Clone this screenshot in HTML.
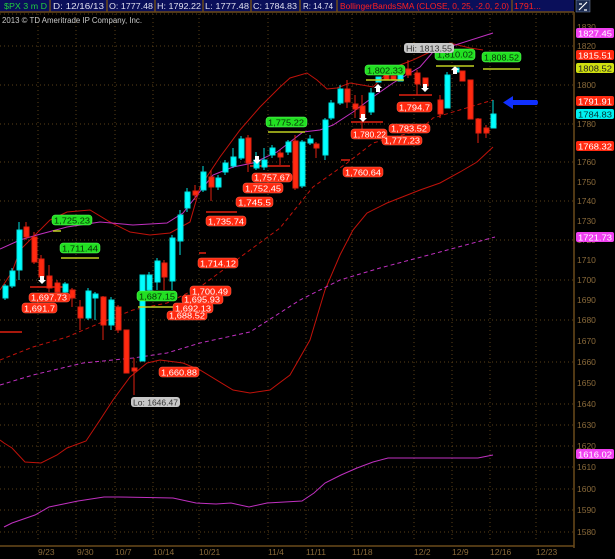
<!DOCTYPE html>
<html><head><meta charset="utf-8"><style>
html,body{margin:0;padding:0;background:#000;}
svg{display:block;font-family:"Liberation Sans",sans-serif;}
</style></head><body>
<svg width="615" height="559" viewBox="0 0 615 559" xmlns="http://www.w3.org/2000/svg">
<rect width="615" height="559" fill="#000"/>
<g stroke="#5a4018" stroke-width="1" stroke-dasharray="1,3">
<line x1="0" y1="14" x2="573" y2="14"/>
<line x1="0" y1="46" x2="573" y2="46"/><line x1="0" y1="85" x2="573" y2="85"/>
<line x1="0" y1="124" x2="573" y2="124"/><line x1="0" y1="162" x2="573" y2="162"/>
<line x1="0" y1="201" x2="573" y2="201"/><line x1="0" y1="240" x2="573" y2="240"/>
<line x1="0" y1="280" x2="573" y2="280"/><line x1="0" y1="320" x2="573" y2="320"/>
<line x1="0" y1="362" x2="573" y2="362"/><line x1="0" y1="404" x2="573" y2="404"/>
<line x1="0" y1="425" x2="573" y2="425"/><line x1="0" y1="446" x2="573" y2="446"/>
<line x1="0" y1="467" x2="573" y2="467"/><line x1="0" y1="489" x2="573" y2="489"/>
<line x1="0" y1="510" x2="573" y2="510"/><line x1="0" y1="532" x2="573" y2="532"/>
<line x1="38" y1="14" x2="38" y2="542"/><line x1="76" y1="14" x2="76" y2="542"/>
<line x1="115" y1="14" x2="115" y2="542"/><line x1="153" y1="14" x2="153" y2="542"/>
<line x1="199" y1="14" x2="199" y2="542"/><line x1="268" y1="14" x2="268" y2="542"/>
<line x1="306" y1="14" x2="306" y2="542"/><line x1="352" y1="14" x2="352" y2="542"/>
<line x1="414" y1="14" x2="414" y2="542"/><line x1="452" y1="14" x2="452" y2="542"/>
<line x1="490" y1="14" x2="490" y2="542"/><line x1="536" y1="14" x2="536" y2="542"/>
</g>
<line x1="574" y1="12" x2="574" y2="548" stroke="#6a4a1a" stroke-width="1.5"/>
<line x1="0" y1="546" x2="574" y2="546" stroke="#6a4a1a" stroke-width="1.5"/>
<g fill="#8a6a3a" font-size="8.5">
<text x="577" y="30">1830</text><text x="577" y="49">1820</text><text x="577" y="88">1800</text>
<text x="577" y="127">1780</text><text x="577" y="165">1760</text><text x="577" y="185">1750</text>
<text x="577" y="204">1740</text><text x="577" y="224">1730</text><text x="577" y="243">1720</text>
<text x="577" y="263">1710</text><text x="577" y="283">1700</text><text x="577" y="303">1690</text>
<text x="577" y="323">1680</text><text x="577" y="344">1670</text><text x="577" y="365">1660</text>
<text x="577" y="386">1650</text><text x="577" y="407">1640</text><text x="577" y="428">1630</text>
<text x="577" y="449">1620</text><text x="577" y="470">1610</text><text x="577" y="492">1600</text>
<text x="577" y="513">1590</text><text x="577" y="535">1580</text>
<text x="38" y="555">9/23</text><text x="77" y="555">9/30</text><text x="115" y="555">10/7</text>
<text x="153" y="555">10/14</text><text x="199" y="555">10/21</text><text x="268" y="555">11/4</text>
<text x="306" y="555">11/11</text><text x="352" y="555">11/18</text><text x="414" y="555">12/2</text>
<text x="452" y="555">12/9</text><text x="490" y="555">12/16</text><text x="536" y="555">12/23</text>
</g>
<g fill="none" stroke-width="1">
<polyline stroke="#c0120a" points="0,290 12,272 20,250 33,237 50,220 67,212 90,210 110,222 130,232 150,235 170,233 190,222 200,187 220,157 240,130 260,107 280,87 290,78 307,73 317,80 327,89 337,88 350,83 362,85 373,87 387,73 400,65 413,60 430,52 450,43 470,48 483,50"/>
<polyline stroke="#c0120a" stroke-dasharray="4,3" points="0,360 33,347 67,337 100,323 133,310 167,303 200,287 250,250 280,228 313,187 347,163 373,143 420,130 433,118 493,100"/>
<polyline stroke="#c0120a" points="0,440 4,443 12,448 25,462 41,463 57,455 67,448 86,441 100,420 113,400 130,377 147,363 160,360 183,363 200,370 233,390 250,393 270,390 290,375 310,340 325,290 340,255 353,230 367,213 387,203 420,190 440,183 460,172 477,162 493,147"/>
<polyline stroke="#c030c0" points="0,249 20,240 37,235 67,227 100,222 133,225 167,223 183,213 213,175 233,167 253,163 277,152 303,132 320,130 333,125 353,112 373,97 393,83 420,67 433,52 493,33"/>
<polyline stroke="#c030c0" stroke-dasharray="4,3" points="0,385 33,375 83,363 133,358 167,353 200,343 250,332 300,300 340,280 380,268 440,252 495,237"/>
<polyline stroke="#c030c0" points="4,527 12,523 35,515 49,507 78,501 104,497 118,497 173,498 196,503 216,504 231,503 249,507 267,503 302,501 314,493 325,483 341,475 357,468 373,462 388,458 412,458 451,458 478,458 493,455"/>
</g>
<g stroke="#e02010" stroke-width="1.5">
<line x1="0" y1="332" x2="22" y2="332"/><line x1="30" y1="287" x2="68" y2="287"/>
<line x1="206" y1="212" x2="237" y2="212"/><line x1="250" y1="166" x2="290" y2="166"/>
<line x1="351" y1="122" x2="383" y2="122"/><line x1="399" y1="95" x2="432" y2="95"/>
<line x1="341" y1="160" x2="350" y2="160"/><line x1="199" y1="253" x2="206" y2="253"/>
</g>
<g stroke-width="1">
<g stroke="#00e0e0" fill="#00ffff">
<line x1="5" y1="284" x2="5" y2="300"/><rect x="3" y="286" width="5" height="12"/>
<line x1="12" y1="268" x2="12" y2="288"/><rect x="10" y="271" width="5" height="15"/>
<line x1="19" y1="222" x2="19" y2="280"/><rect x="17" y="230" width="5" height="40"/>
<line x1="65" y1="282" x2="65" y2="296"/><rect x="63" y="284" width="5" height="8"/>
<line x1="88" y1="288" x2="88" y2="320"/><rect x="86" y="291" width="5" height="27"/>
<line x1="95" y1="292" x2="95" y2="320"/><rect x="93" y="294" width="5" height="4"/>
<line x1="111" y1="297" x2="111" y2="330"/><rect x="109" y="300" width="5" height="25"/>
<rect x="140" y="275" width="5" height="86"/>
<line x1="149" y1="272" x2="149" y2="300"/><rect x="147" y="275" width="5" height="15"/>
<line x1="157" y1="258" x2="157" y2="290"/><rect x="155" y="261" width="5" height="21"/>
<line x1="172" y1="235" x2="172" y2="290"/><rect x="170" y="238" width="5" height="43"/>
<line x1="180" y1="210" x2="180" y2="255"/><rect x="178" y="215" width="5" height="26"/>
<line x1="187" y1="188" x2="187" y2="212"/><rect x="185" y="192" width="5" height="16"/>
<line x1="203" y1="166" x2="203" y2="192"/><rect x="201" y="172" width="5" height="18"/>
<line x1="218" y1="175" x2="218" y2="190"/><rect x="216" y="178" width="5" height="9"/>
<line x1="225" y1="160" x2="225" y2="175"/><rect x="223" y="163" width="5" height="9"/>
<line x1="233" y1="148" x2="233" y2="168"/><rect x="231" y="157" width="5" height="9"/>
<line x1="241" y1="136" x2="241" y2="160"/><rect x="239" y="139" width="5" height="19"/>
<line x1="256" y1="152" x2="256" y2="170"/><rect x="254" y="160" width="5" height="8"/>
<line x1="264" y1="148" x2="264" y2="170"/><rect x="262" y="160" width="5" height="7"/>
<line x1="272" y1="145" x2="272" y2="158"/><rect x="270" y="148" width="5" height="7"/>
<line x1="288" y1="140" x2="288" y2="155"/><rect x="286" y="142" width="5" height="10"/>
<line x1="302" y1="140" x2="302" y2="188"/><rect x="300" y="142" width="5" height="44"/>
<line x1="310" y1="135" x2="310" y2="145"/><rect x="308" y="139" width="5" height="4"/>
<line x1="325" y1="118" x2="325" y2="160"/><rect x="323" y="120" width="5" height="35"/>
<line x1="331" y1="100" x2="331" y2="120"/><rect x="329" y="103" width="5" height="15"/>
<line x1="340" y1="85" x2="340" y2="105"/><rect x="338" y="89" width="5" height="14"/>
<line x1="371" y1="88" x2="371" y2="115"/><rect x="369" y="93" width="5" height="19"/>
<rect x="376" y="77" width="5" height="5"/><rect x="398" y="75" width="5" height="6"/>
<line x1="447" y1="72" x2="447" y2="108"/><rect x="445" y="75" width="5" height="33"/>
<rect x="454" y="68" width="5" height="4"/>
<line x1="493" y1="100" x2="493" y2="128"/><rect x="491" y="114" width="5" height="14"/>
</g>
<g stroke="#e02010" fill="#ff2a10">
<line x1="26" y1="222" x2="26" y2="240"/><rect x="24" y="227" width="5" height="10"/>
<line x1="34" y1="232" x2="34" y2="264"/><rect x="32" y="237" width="5" height="25"/>
<line x1="41" y1="255" x2="41" y2="281"/><rect x="39" y="259" width="5" height="18"/>
<line x1="49" y1="265" x2="49" y2="292"/><rect x="47" y="276" width="5" height="12"/>
<line x1="57" y1="280" x2="57" y2="300"/><rect x="55" y="283" width="5" height="9"/>
<line x1="72" y1="288" x2="72" y2="307"/><rect x="70" y="290" width="5" height="8"/>
<line x1="80" y1="300" x2="80" y2="330"/><rect x="78" y="307" width="5" height="11"/>
<line x1="103" y1="296" x2="103" y2="340"/><rect x="101" y="297" width="5" height="28"/>
<line x1="118" y1="305" x2="118" y2="333"/><rect x="116" y="307" width="5" height="23"/>
<rect x="124" y="330" width="5" height="43"/>
<line x1="134" y1="358" x2="134" y2="395"/><rect x="132" y="368" width="5" height="3"/>
<line x1="164" y1="260" x2="164" y2="290"/><rect x="162" y="263" width="5" height="14"/>
<line x1="195" y1="185" x2="195" y2="200"/><rect x="193" y="191" width="5" height="4"/>
<line x1="211" y1="170" x2="211" y2="201"/><rect x="209" y="177" width="5" height="10"/>
<line x1="248" y1="135" x2="248" y2="172"/><rect x="246" y="138" width="5" height="25"/>
<line x1="280" y1="150" x2="280" y2="165"/><rect x="278" y="153" width="5" height="4"/>
<line x1="295" y1="135" x2="295" y2="190"/><rect x="293" y="141" width="5" height="47"/>
<line x1="316" y1="142" x2="316" y2="158"/><rect x="314" y="144" width="5" height="4"/>
<line x1="347" y1="80" x2="347" y2="108"/><rect x="345" y="89" width="5" height="13"/>
<line x1="355" y1="95" x2="355" y2="118"/><rect x="353" y="104" width="5" height="5"/>
<line x1="362" y1="95" x2="362" y2="130"/><rect x="360" y="106" width="5" height="12"/>
<rect x="384" y="72" width="5" height="8"/><rect x="391" y="76" width="5" height="4"/>
<line x1="408" y1="60" x2="408" y2="78"/><rect x="406" y="69" width="5" height="6"/>
<line x1="417" y1="70" x2="417" y2="95"/><rect x="415" y="73" width="5" height="11"/>
<rect x="423" y="78" width="5" height="8"/>
<line x1="440" y1="95" x2="440" y2="118"/><rect x="438" y="100" width="5" height="14"/>
<rect x="460" y="71" width="5" height="10"/>
<rect x="468" y="80" width="5" height="39"/>
<line x1="478" y1="118" x2="478" y2="143"/><rect x="476" y="119" width="5" height="14"/>
<line x1="486" y1="125" x2="486" y2="138"/><rect x="484" y="128" width="5" height="5"/>
</g>
</g>
<g fill="#fff">
<path d="M40,276 h4 v4 h2 l-4,4 l-4,-4 h2z"/>
<path d="M255,156 h4 v4 h2 l-4,4 l-4,-4 h2z"/>
<path d="M361,114 h4 v4 h2 l-4,4 l-4,-4 h2z"/>
<path d="M423,84 h4 v4 h2 l-4,4 l-4,-4 h2z"/>
<path d="M376,92 h4 v-4 h2 l-4,-4 l-4,4 h2z"/>
<path d="M453,74 h4 v-4 h2 l-4,-4 l-4,4 h2z"/>
</g>
<g stroke="#c0d020" stroke-width="1.5">
<line x1="53" y1="231" x2="61" y2="231"/><line x1="61" y1="258" x2="99" y2="258"/>
<line x1="138" y1="307" x2="175" y2="307"/><line x1="268" y1="132" x2="305" y2="132"/>
<line x1="366" y1="80" x2="404" y2="80"/><line x1="436" y1="66" x2="474" y2="66"/>
<line x1="483" y1="69" x2="520" y2="69"/>
</g>
<g font-size="8.5">
<g fill="#ff2a10" stroke="#ff6a50" stroke-width="0.5">
<rect x="206" y="216" width="40" height="10" rx="3"/><rect x="198" y="258" width="40" height="10" rx="3"/>
<rect x="190" y="286" width="41" height="10" rx="3"/><rect x="182" y="295" width="41" height="9" rx="3"/>
<rect x="173" y="303" width="40" height="10" rx="3"/><rect x="167" y="311" width="40" height="9" rx="3"/>
<rect x="159" y="367" width="40" height="10" rx="3"/><rect x="29" y="293" width="41" height="9" rx="3"/>
<rect x="22" y="303" width="35" height="10" rx="3"/><rect x="252" y="173" width="40" height="9" rx="3"/>
<rect x="243" y="183" width="40" height="10" rx="3"/><rect x="236" y="197" width="37" height="10" rx="3"/>
<rect x="343" y="167" width="40" height="10" rx="3"/><rect x="351" y="129" width="36" height="10" rx="3"/>
<rect x="389" y="124" width="41" height="9" rx="3"/><rect x="382" y="136" width="40" height="9" rx="3"/>
<rect x="397" y="102" width="35" height="10" rx="3"/>
</g>
<g fill="#fff">
<text x="208" y="224.5" textLength="36" lengthAdjust="spacingAndGlyphs">1,735.74</text><text x="200" y="266.5" textLength="36" lengthAdjust="spacingAndGlyphs">1,714.12</text>
<text x="192" y="294.5" textLength="36" lengthAdjust="spacingAndGlyphs">1,700.49</text><text x="184" y="302.5" textLength="36" lengthAdjust="spacingAndGlyphs">1,695.93</text>
<text x="175" y="311.5" textLength="36" lengthAdjust="spacingAndGlyphs">1,692.13</text><text x="169" y="318.5" textLength="36" lengthAdjust="spacingAndGlyphs">1,688.52</text>
<text x="161" y="375.5" textLength="36" lengthAdjust="spacingAndGlyphs">1,660.88</text><text x="31" y="300.5" textLength="36" lengthAdjust="spacingAndGlyphs">1,697.73</text>
<text x="24" y="311.5" textLength="31" lengthAdjust="spacingAndGlyphs">1,691.7</text><text x="254" y="180.5" textLength="36" lengthAdjust="spacingAndGlyphs">1,757.67</text>
<text x="245" y="191.5" textLength="36" lengthAdjust="spacingAndGlyphs">1,752.45</text><text x="238" y="205.5" textLength="33" lengthAdjust="spacingAndGlyphs">1,745.5</text>
<text x="345" y="175.5" textLength="36" lengthAdjust="spacingAndGlyphs">1,760.64</text><text x="353" y="137.5" textLength="33" lengthAdjust="spacingAndGlyphs">1,780.22</text>
<text x="391" y="131.5" textLength="36" lengthAdjust="spacingAndGlyphs">1,783.52</text><text x="384" y="143.5" textLength="36" lengthAdjust="spacingAndGlyphs">1,777.23</text>
<text x="399" y="110.5" textLength="31" lengthAdjust="spacingAndGlyphs">1,794.7</text>
</g>
<g fill="#22e022" stroke="#60ff60" stroke-width="0.5">
<rect x="52" y="215" width="40" height="10" rx="3"/><rect x="60" y="243" width="40" height="10" rx="3"/>
<rect x="137" y="291" width="40" height="10" rx="3"/><rect x="266" y="117" width="41" height="10" rx="3"/>
<rect x="365" y="65" width="40" height="10" rx="3"/><rect x="435" y="49" width="40" height="11" rx="3"/>
<rect x="482" y="52" width="39" height="10" rx="3"/>
</g>
<g fill="#063006">
<text x="54" y="223.5" textLength="36" lengthAdjust="spacingAndGlyphs">1,725.23</text><text x="62" y="251.5" textLength="36" lengthAdjust="spacingAndGlyphs">1,711.44</text>
<text x="139" y="299.5" textLength="36" lengthAdjust="spacingAndGlyphs">1,687.15</text><text x="268" y="125.5" textLength="36" lengthAdjust="spacingAndGlyphs">1,775.22</text>
<text x="367" y="73.5" textLength="36" lengthAdjust="spacingAndGlyphs">1,802.33</text><text x="437" y="57.5" textLength="36" lengthAdjust="spacingAndGlyphs">1,810.02</text>
<text x="484" y="60.5" textLength="35" lengthAdjust="spacingAndGlyphs">1,808.52</text>
</g>
<rect x="404" y="43" width="50" height="10" rx="3" fill="#c8c8c8"/>
<text x="406" y="51.5" fill="#333" textLength="46" lengthAdjust="spacingAndGlyphs">Hi: 1813.55</text>
<rect x="131" y="397" width="49" height="10" rx="3" fill="#c8c8c8"/>
<text x="133" y="405.5" fill="#333" textLength="45" lengthAdjust="spacingAndGlyphs">Lo: 1646.47</text>
</g>
<path d="M503,102.5 L513,96 L513,100 L537,100 Q539,102.5 537,105 L513,105 L513,109 Z" fill="#1030ff"/>
<g font-size="8.5">
<rect x="576" y="28" width="38" height="10" rx="2" fill="#f040f0"/><text x="578" y="36.5" fill="#fff" textLength="34" lengthAdjust="spacingAndGlyphs">1827.45</text>
<rect x="576" y="50" width="38" height="10" rx="2" fill="#ff2a10"/><text x="578" y="58.5" fill="#fff" textLength="34" lengthAdjust="spacingAndGlyphs">1815.51</text>
<rect x="576" y="63" width="38" height="10" rx="2" fill="#d0e010"/><text x="578" y="71.5" fill="#222" textLength="34" lengthAdjust="spacingAndGlyphs">1808.52</text>
<rect x="576" y="96" width="38" height="10" rx="2" fill="#ff2a10"/><text x="578" y="104.5" fill="#fff" textLength="34" lengthAdjust="spacingAndGlyphs">1791.91</text>
<rect x="576" y="109" width="38" height="10" rx="2" fill="#00f0f0"/><text x="578" y="117.5" fill="#033" textLength="34" lengthAdjust="spacingAndGlyphs">1784.83</text>
<rect x="576" y="141" width="38" height="10" rx="2" fill="#ff2a10"/><text x="578" y="149.5" fill="#fff" textLength="34" lengthAdjust="spacingAndGlyphs">1768.32</text>
<rect x="576" y="232" width="38" height="10" rx="2" fill="#f040f0"/><text x="578" y="240.5" fill="#fff" textLength="34" lengthAdjust="spacingAndGlyphs">1721.73</text>
<rect x="576" y="449" width="38" height="10" rx="2" fill="#f040f0"/><text x="578" y="457.5" fill="#fff" textLength="34" lengthAdjust="spacingAndGlyphs">1616.02</text>
</g>
<rect x="0" y="0" width="574" height="12" fill="#0a0f5a"/>
<g stroke="#6a4a1a" stroke-width="1.5">
<line x1="50" y1="0" x2="50" y2="12"/><line x1="107" y1="0" x2="107" y2="12"/>
<line x1="155" y1="0" x2="155" y2="12"/><line x1="203" y1="0" x2="203" y2="12"/>
<line x1="251" y1="0" x2="251" y2="12"/><line x1="300" y1="0" x2="300" y2="12"/>
<line x1="337" y1="0" x2="337" y2="12"/><line x1="512" y1="0" x2="512" y2="12"/>
<line x1="0" y1="12" x2="574" y2="12"/>
</g>
<g font-size="8">
<text x="4" y="9" fill="#20d040" textLength="43" lengthAdjust="spacingAndGlyphs">$PX 3 m D</text>
<text x="53" y="9" fill="#e0e0f0" textLength="51" lengthAdjust="spacingAndGlyphs">D: 12/16/13</text>
<text x="109" y="9" fill="#e0e0f0" textLength="44" lengthAdjust="spacingAndGlyphs">O: 1777.48</text>
<text x="157" y="9" fill="#e0e0f0" textLength="44" lengthAdjust="spacingAndGlyphs">H: 1792.22</text>
<text x="205" y="9" fill="#e0e0f0" textLength="44" lengthAdjust="spacingAndGlyphs">L: 1777.48</text>
<text x="253" y="9" fill="#e0e0f0" textLength="44" lengthAdjust="spacingAndGlyphs">C: 1784.83</text>
<text x="303" y="9" fill="#e0e0f0" textLength="30" lengthAdjust="spacingAndGlyphs">R: 14.74</text>
<text x="340" y="9" fill="#ff2020" textLength="169" lengthAdjust="spacingAndGlyphs">BollingerBandsSMA (CLOSE, 0, 25, -2.0, 2.0)</text>
<text x="514" y="9" fill="#ff2020" textLength="27" lengthAdjust="spacingAndGlyphs">1791...</text>
</g>
<rect x="576" y="0" width="14" height="12" fill="#1a2a50" stroke="#8090b0" stroke-width="0.5"/>
<path d="M579,10 L587,2 M579,4 h3 M584,10 h3" stroke="#fff" stroke-width="1.2"/>
<text x="2" y="23" font-size="8" fill="#c8c8c8" textLength="140" lengthAdjust="spacingAndGlyphs">2013 © TD Ameritrade IP Company, Inc.</text>
</svg>
</body></html>
